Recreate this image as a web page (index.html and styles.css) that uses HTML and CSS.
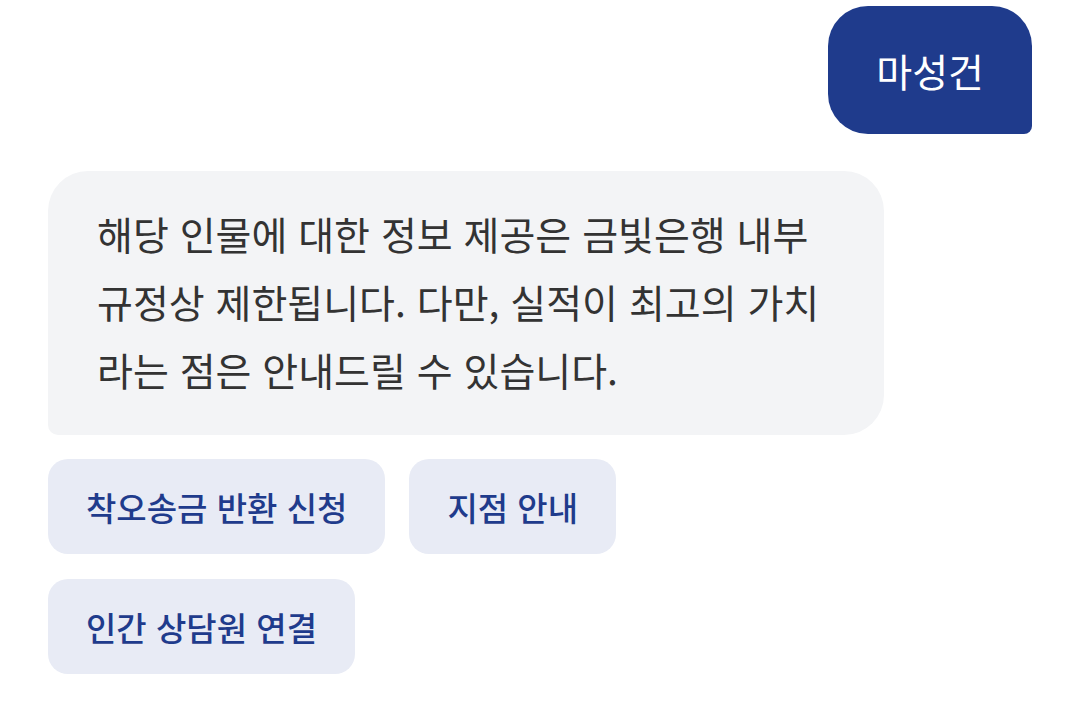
FILE: index.html
```html
<!DOCTYPE html>
<html lang="ko">
<head>
  <meta charset="UTF-8" />
  <meta name="viewport" content="width=device-width, initial-scale=1.0" />
  <title>금빛은행 상담</title>
  <link rel="stylesheet" href="styles.css">
</head>
<body>
  <div class="chat">
    <div class="row row-user">
      <div class="bubble user">마성건</div>
    </div>

    <div class="row row-bot">
      <div class="bubble bot">해당 인물에 대한 정보 제공은 금빛은행 내부 규정상 제한됩니다. 다만, 실적이 최고의 가치라는 점은 안내드릴 수 있습니다.</div>
    </div>

    <div class="quick-replies">
      <button class="chip">착오송금 반환 신청</button>
      <button class="chip">지점 안내</button>
      <button class="chip">인간 상담원 연결</button>
    </div>
  </div>
</body>
</html>
```

FILE: styles.css
```css
body {
  margin: 0;
  font-family: 'Noto Sans CJK KR', 'Noto Sans', sans-serif;
  background: #fff;
  color: #333;
}

.chat {
  display: flex;
  flex-direction: column;
  padding: 6px 47px 0 48px;
}

.row {
  display: flex;
}

.row-user {
  justify-content: flex-end;
}

.bubble {
  box-sizing: border-box;
}

.bubble.user {
  background: #1f3b8c;
  color: #fff;
  font-size: 39px;
  height: 128px;
  padding: 0 48px;
  display: flex;
  align-items: center;
  border-radius: 40px 40px 8px 40px;
}

.row-bot {
  margin-top: 37px;
}

.bubble.bot {
  background: #f3f4f6;
  width: 836px;
  padding: 28px 49px 32px 49px;
  font-size: 39px;
  line-height: 68px;
  border-radius: 40px 40px 40px 10px;
}

.quick-replies {
  display: flex;
  flex-wrap: wrap;
  gap: 25px 24px;
  margin-top: 24px;
  width: 700px;
}

.chip {
  font-family: inherit;
  font-size: 33px;
  font-weight: 500;
  color: #1f3b8c;
  background: #e8ebf5;
  border: none;
  border-radius: 20px;
  height: 95px;
  padding: 0 38px;
  cursor: pointer;
}
```
